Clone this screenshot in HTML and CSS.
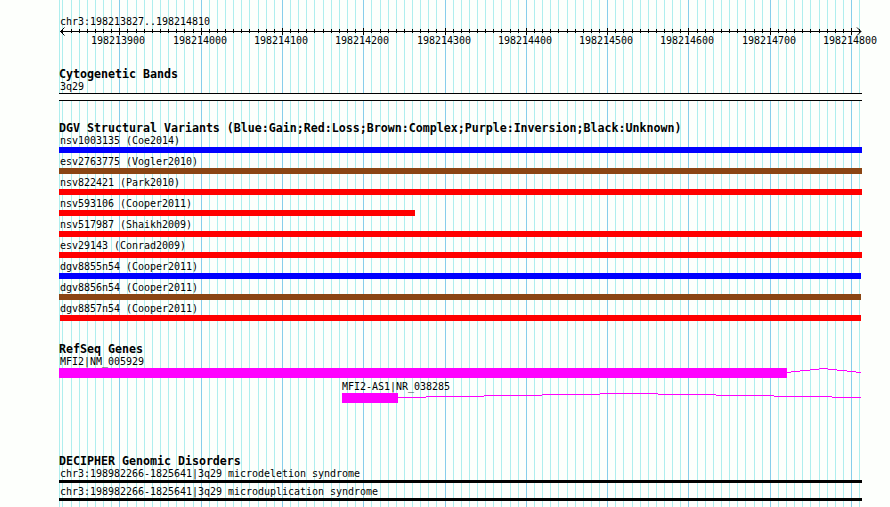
FILE: index.html
```html
<!DOCTYPE html>
<html lang="en">
<head>
    <meta charset="UTF-8">
    <title>chr3:198213827..198214810</title>
    <link rel="stylesheet" href="styles.css">
</head>
<body>
    <svg class="grid" id="grid" width="890" height="507" shape-rendering="crispEdges"></svg>
    <main class="tracks">
        <section class="overview">
            <div class="label">chr3:198213827..198214810</div>
            <svg class="ruler" id="ruler" width="831" height="22">
                <path d="M1 4.5H802M5.5 0.5L1.5 4.5L5.5 8.5M798 0.5L802 4.5L798 8.5" fill="none" stroke="#000"/>
            </svg>
        </section>

        <section class="track cytobands">
            <h2>Cytogenetic Bands</h2>
            <div class="label">3q29</div>
            <div class="band"></div>
        </section>

        <section class="track variants">
            <h2>DGV Structural Variants (Blue:Gain;Red:Loss;Brown:Complex;Purple:Inversion;Black:Unknown)</h2>
            <div class="label">nsv1003135 (Coe2014)</div>
            <div class="bar gain"></div>
            <div class="label">esv2763775 (Vogler2010)</div>
            <div class="bar complex"></div>
            <div class="label">nsv822421 (Park2010)</div>
            <div class="bar loss"></div>
            <div class="label">nsv593106 (Cooper2011)</div>
            <div class="bar loss partial"></div>
            <div class="label">nsv517987 (Shaikh2009)</div>
            <div class="bar loss"></div>
            <div class="label">esv29143 (Conrad2009)</div>
            <div class="bar loss"></div>
            <div class="label">dgv8855n54 (Cooper2011)</div>
            <div class="bar gain short"></div>
            <div class="label">dgv8856n54 (Cooper2011)</div>
            <div class="bar complex short"></div>
            <div class="label">dgv8857n54 (Cooper2011)</div>
            <div class="bar loss short inset"></div>
        </section>

        <section class="track genes">
            <h2>RefSeq Genes</h2>
            <div class="label">MFI2|NM_005929</div>
            <div class="gene">
                <div class="exon mfi2"></div>
                <svg width="74" height="10" shape-rendering="crispEdges">
                    <path d="M0 4.5H4M4 3.5H13M13 2.5H23M23 1.5H32M32 0.5H41M41 1.5H50M50 2.5H60M60 3.5H69M69 4.5H74" stroke="#f0f"/>
                </svg>
            </div>
            <div class="label as1-label">MFI2-AS1|NR_038285</div>
            <div class="gene as1">
                <div class="exon"></div>
                <svg width="463" height="10" shape-rendering="crispEdges">
                    <path d="M0 4.5H28M28 3.5H86M86 2.5H144M144 1.5H202M202 0.5H260M260 1.5H318M318 2.5H376M376 3.5H434M434 4.5H463" stroke="#f0f"/>
                </svg>
            </div>
        </section>

        <section class="track decipher">
            <h2>DECIPHER Genomic Disorders</h2>
            <div class="label">chr3:198982266-1825641|3q29 microdeletion syndrome</div>
            <div class="bar disorder"></div>
            <div class="label">chr3:198982266-1825641|3q29 microduplication syndrome</div>
            <div class="bar disorder"></div>
        </section>
    </main>

    <script>
        const NS = 'http://www.w3.org/2000/svg';
        const grid = document.getElementById('grid');
        const ruler = document.getElementById('ruler');
        const left = 59;

        function rect(parent, x, y, w, h, fill) {
            const el = document.createElementNS(NS, 'rect');
            el.setAttribute('x', x);
            el.setAttribute('y', y);
            el.setAttribute('width', w);
            el.setAttribute('height', h);
            el.setAttribute('fill', fill);
            parent.appendChild(el);
        }

        rect(grid, left, 0, 1, 507, '#afeeee');

        // one line every 10 bp, a darker one every 100 bp
        for (let k = -7; k <= 91; k++) {
            const x = Math.floor(119.86 + k * 8000 / 984);
            const major = k % 10 === 0;
            rect(grid, x, 0, 1, 507, major ? '#87ceeb' : '#afeeee');
            rect(ruler, x - left, major ? 1 : 2, 1, major ? 7 : 4, '#000');
            if (major) {
                const text = document.createElementNS(NS, 'text');
                text.setAttribute('x', x - left - 28);
                text.setAttribute('y', 17);
                text.textContent = 198213900 + k * 10;
                ruler.appendChild(text);
            }
        }
    </script>
</body>
</html>
```
FILE: styles.css
```css
body {
    margin: 0;
    height: 507px;
    overflow: hidden;
    position: relative;
    background-color: #fdfffc;
    color: #000;
    font-family: "DejaVu Sans Mono", monospace;
    font-size: 10px;
    letter-spacing: -0.02px;
}
.grid {
    position: absolute;
    top: 0;
    left: 0;
}
.tracks {
    position: relative;
    padding: 13px 0 0 59px;
}
.label {
    height: 15px;
    line-height: 17px;
    padding-left: 1px;
    white-space: nowrap;
}
h2 {
    margin: 0;
    height: 10px;
    line-height: 12px;
    font-size: 11.65px;
    font-weight: bold;
    letter-spacing: -0.014px;
    white-space: nowrap;
}
svg {
    display: block;
}
.overview {
    height: 55px;
}
.overview .label {
    height: 14px;
}
.cytobands {
    height: 54px;
}
.band {
    width: 803px;
    height: 8px;
    box-sizing: border-box;
    border-top: 1px solid #000;
    border-bottom: 1px solid #000;
    background-color: #fdfffc;
}
.variants {
    height: 221px;
}
.bar {
    width: 803px;
    height: 6px;
}
.gain {
    background-color: #0000ff;
}
.loss {
    background-color: #ff0000;
}
.complex {
    background-color: #8b4513;
}
.partial {
    width: 356px;
}
.short {
    width: 802px;
}
.inset {
    width: 801px;
    margin-left: 1px;
}
.genes {
    height: 112px;
}
.gene {
    display: flex;
    height: 10px;
}
.exon {
    width: 56px;
    background-color: #ff00ff;
}
.mfi2 {
    width: 728px;
}
.as1-label {
    margin-left: 282px;
}
.as1 {
    margin-left: 283px;
}
.decipher .disorder {
    height: 3px;
    background-color: #000;
}
```
